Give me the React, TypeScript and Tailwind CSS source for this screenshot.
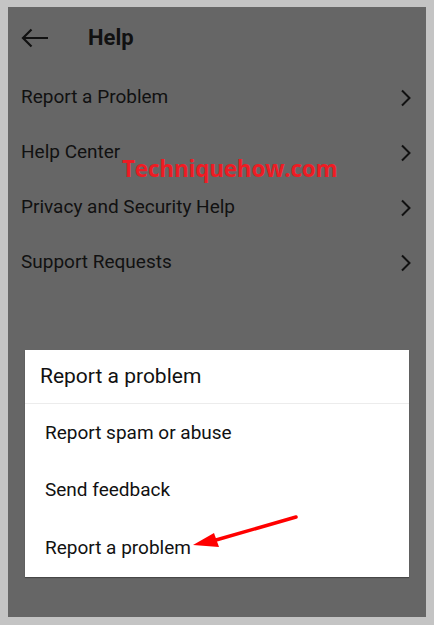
import React from 'react';

const rows = ['Report a Problem', 'Help Center', 'Privacy and Security Help', 'Support Requests'];
const options = ['Report spam or abuse', 'Send feedback', 'Report a problem'];

const Chevron = () => (
  <svg width="12" height="18" viewBox="0 0 12 18" fill="none">
    <path d="M2 1.5 L9.5 9 L2 16.5" stroke="#111" strokeWidth="2" />
  </svg>
);

const App = () => {
  return (
    <div className="w-[434px] h-[625px] bg-[#c4c4c4] pt-[7px] pb-[8px] px-[8px] font-['Roboto',sans-serif]">
      <div className="relative h-full bg-[#666666]">
        {/* header */}
        <div className="h-[63px] flex items-center pl-[13px] pb-[2px]">
          <svg width="28" height="20" viewBox="0 0 28 20" fill="none">
            <path d="M27 10 H2 M10.5 1.5 L2 10 L10.5 18.5" stroke="#111" strokeWidth="2.2" />
          </svg>
          <h1 className="ml-[39px] text-[22px] font-bold text-[#111]">Help</h1>
        </div>

        {rows.map((r) => (
          <div key={r} className="h-[55px] flex items-center justify-between pl-[13px] pr-[14px]">
            <span className="text-[19px] text-[#111]">{r}</span>
            <Chevron />
          </div>
        ))}

        {/* watermark */}
        <div className="absolute left-[114px] top-[145px] text-[22.5px] font-bold text-[#ee1c24] font-['Open_Sans',sans-serif] tracking-[-0.2px]">
          Techniquehow.com
        </div>

        {/* dialog */}
        <div className="absolute left-[17px] top-[343px] w-[384px] bg-white shadow-[0_1px_1px_rgba(0,0,0,0.3)]">
          <div className="h-[54px] flex items-center pl-[15px] border-b border-[#ececec]">
            <span className="text-[21px] text-[#111]">Report a problem</span>
          </div>
          {options.map((o) => (
            <div key={o} className="h-[57.5px] flex items-center pl-[20px]">
              <span className="text-[19px] text-[#111]">{o}</span>
            </div>
          ))}
        </div>

        {/* red arrow */}
        <svg className="absolute left-[180px] top-[500px]" width="120" height="50" viewBox="0 0 120 50" fill="none">
          <path d="M108 10 L28 33" stroke="#ff0000" strokeWidth="3.5" strokeLinecap="round" />
          <path d="M5 38 L26 26 L31 40 Z" fill="#ff0000" />
        </svg>
      </div>
    </div>
  );
};

export default App;
